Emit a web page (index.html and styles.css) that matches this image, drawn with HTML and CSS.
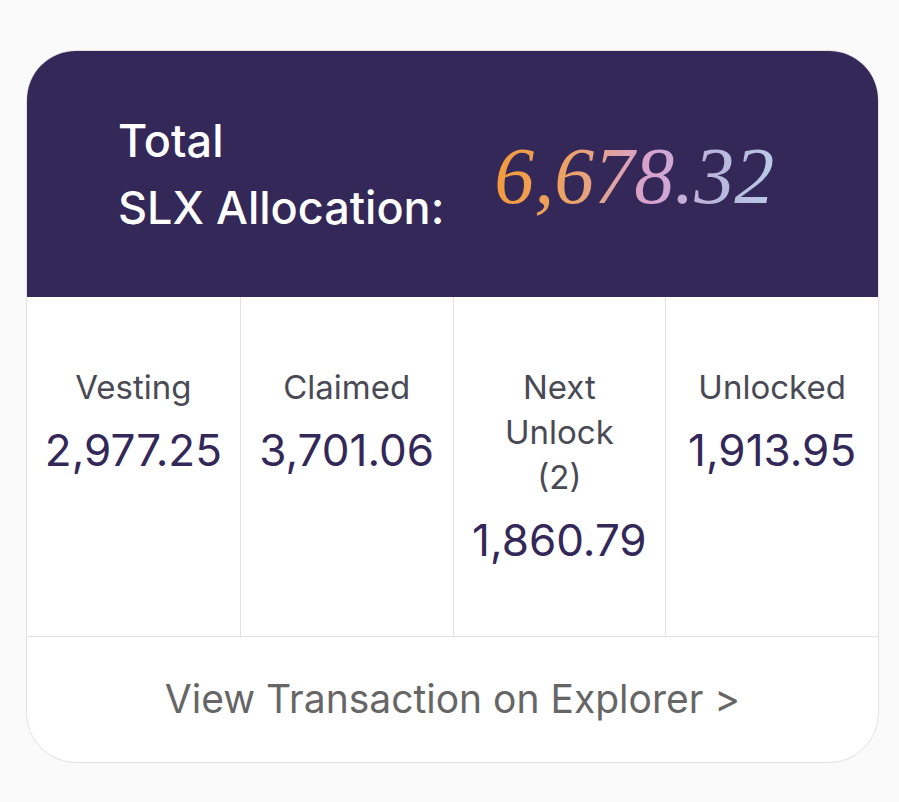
FILE: index.html
```html
<!DOCTYPE html>
<html lang="en">
<head>
    <meta charset="UTF-8">
    <meta name="viewport" content="width=device-width, initial-scale=1.0">
    <title>SLX Allocation</title>
    <link rel="stylesheet" href="styles.css">
</head>
<body>
    <div class="card">
        <div class="card-header">
            <h2 class="total-title">Total<br>SLX Allocation:</h2>
            <span class="total-amount">6,678.32</span>
        </div>

        <div class="stats">
            <div class="stat">
                <span class="stat-label">Vesting</span>
                <span class="stat-value">2,977.25</span>
            </div>
            <div class="stat">
                <span class="stat-label">Claimed</span>
                <span class="stat-value">3,701.06</span>
            </div>
            <div class="stat">
                <span class="stat-label">Next Unlock (2)</span>
                <span class="stat-value">1,860.79</span>
            </div>
            <div class="stat">
                <span class="stat-label">Unlocked</span>
                <span class="stat-value">1,913.95</span>
            </div>
        </div>

        <a class="explorer-link" href="#">View Transaction on Explorer &gt;</a>
    </div>
</body>
</html>
```

FILE: styles.css
```css
body {
    margin: 0;
    padding: 50px 20px 40px 26px;
    background-color: #fafafa;
    font-family: Inter, "Noto Sans", sans-serif;
}

.card {
    width: 851px;
    background: #ffffff;
    border: 1px solid #e2e2e2;
    border-radius: 50px;
    overflow: hidden;
}

.card-header {
    display: flex;
    align-items: center;
    height: 246px;
    padding-left: 91px;
    background-color: #332858;
}

.total-title {
    margin: 0;
    font-size: 45px;
    font-weight: 500;
    line-height: 67px;
    color: #ffffff;
}

.total-amount {
    margin-left: 50px;
    margin-top: 4px;
    font-family: "Liberation Serif", serif;
    font-style: italic;
    font-size: 80px;
    background: linear-gradient(90deg, #f39a3a 0%, #eba26a 28%, #d8a2cf 55%, #b7b7dc 80%, #bac9e6 100%);
    -webkit-background-clip: text;
    background-clip: text;
    color: transparent;
}

.stats {
    display: grid;
    grid-template-columns: repeat(4, 1fr);
    border-bottom: 1px solid #e2e2e2;
}

.stat {
    display: flex;
    flex-direction: column;
    align-items: center;
    height: 339px;
    padding: 68px 10px 0;
    box-sizing: border-box;
    text-align: center;
    border-left: 1px solid #e2e2e2;
}

.stat:first-child {
    border-left: none;
}

.stat-label {
    max-width: 152px;
    font-size: 33px;
    line-height: 45px;
    color: #4a4a55;
}

.stat-value {
    margin-top: 14px;
    font-size: 44px;
    line-height: 52px;
    color: #332858;
}

.explorer-link {
    display: block;
    height: 125px;
    line-height: 123px;
    text-align: center;
    font-size: 39px;
    color: #666666;
    text-decoration: none;
}
```
